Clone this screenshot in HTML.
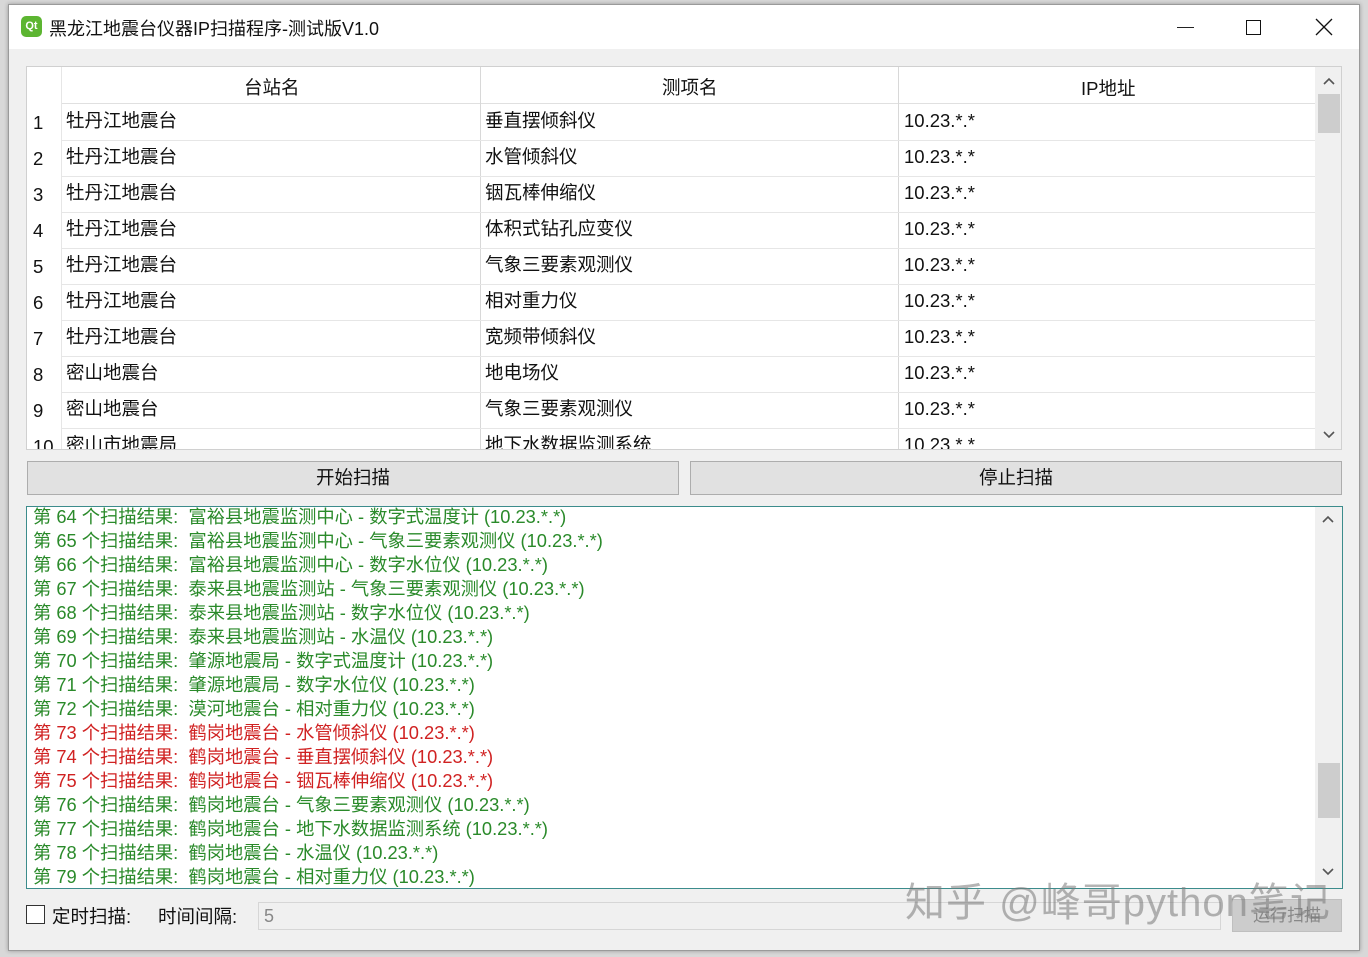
<!DOCTYPE html>
<html><head><meta charset="utf-8"><style>
*{box-sizing:border-box;margin:0;padding:0}
body{width:1368px;height:957px;background:#d8d8d8;position:relative;overflow:hidden;font-family:"Liberation Sans","Noto Sans CJK SC",sans-serif;color:#111}
.a{position:absolute}
#win{left:8px;top:4px;width:1352px;height:947px;background:#f0f0f0;border:1px solid #9a9a9a;box-shadow:0 0 4px rgba(0,0,0,.3)}
#title{left:9px;top:5px;width:1350px;height:44px;background:#fff}
.cell{position:absolute;font-size:18.5px;white-space:nowrap;overflow:hidden}
.log{position:absolute;left:33px;font-size:18.3px;white-space:nowrap;color:#2a8a2a}
.red{color:#d02222}
.btn{position:absolute;background:#e1e1e1;border:1px solid #adadad;font-size:18.5px;text-align:center;line-height:31px}
</style></head><body>
<div id="win" class="a"></div>
<div id="title" class="a"></div>
<div class="a" style="left:21px;top:16px;width:21px;height:21px;border-radius:5px;background:#5cb531;color:#fff;font-size:11px;font-weight:bold;line-height:21px;text-align:center">Qt</div>
<div class="a" style="left:49px;top:15px;font-size:18px">黑龙江地震台仪器IP扫描程序-测试版V1.0</div>
<div class="a" style="left:1177px;top:27px;width:17px;height:1px;background:#222"></div>
<div class="a" style="left:1246px;top:20px;width:15px;height:15px;border:1.5px solid #111"></div>
<svg class="a" style="left:1315px;top:18px" width="18" height="18"><path d="M1 1L17 17M17 1L1 17" stroke="#111" stroke-width="1.3"/></svg>

<div class="a" style="left:26px;top:66px;width:1316px;height:384px;background:#fff;border:1px solid #d0d0d0;overflow:hidden">
<div class="a" style="left:0;top:0;width:35px;height:384px;background:#fff;border-right:1px solid #e6e6e6"></div>
<div class="a" style="left:35px;top:0;width:1253px;height:37px;border-bottom:1px solid #e0e0e0"></div>
<div class="a" style="left:453px;top:0;width:1px;height:384px;background:#d8d8d8"></div>
<div class="a" style="left:871px;top:0;width:1px;height:384px;background:#d8d8d8"></div>
<div class="cell" style="left:217px;top:7px">台站名</div>
<div class="cell" style="left:635px;top:7px">测项名</div>
<div class="cell" style="left:1054px;top:8px">IP地址</div>
<div id="rows"></div>
<div class="a" style="left:1288px;top:0;width:27px;height:384px;background:#f0f0f0"></div>
<div class="a" style="left:1291px;top:27px;width:22px;height:39px;background:#cdcdcd"></div>
<svg class="a" style="left:1296px;top:10px" width="12" height="8"><path d="M1 7L6 2L11 7" fill="none" stroke="#555" stroke-width="1.6"/></svg>
<svg class="a" style="left:1296px;top:364px" width="12" height="8"><path d="M1 1L6 6L11 1" fill="none" stroke="#555" stroke-width="1.6"/></svg>
</div>

<div class="btn" style="left:27px;top:461px;width:652px;height:34px">开始扫描</div>
<div class="btn" style="left:690px;top:461px;width:652px;height:34px">停止扫描</div>

<div class="a" style="left:26px;top:506px;width:1317px;height:383px;background:#fff;border:1px solid #3c8c8c;overflow:hidden"></div>
<div id="logs"></div>
<div class="a" style="left:1315px;top:507px;width:27px;height:381px;background:#f0f0f0"></div>
<div class="a" style="left:1318px;top:763px;width:22px;height:55px;background:#cdcdcd"></div>
<svg class="a" style="left:1322px;top:515px" width="12" height="8"><path d="M1 7L6 2L11 7" fill="none" stroke="#555" stroke-width="1.6"/></svg>
<svg class="a" style="left:1322px;top:868px" width="12" height="8"><path d="M1 1L6 6L11 1" fill="none" stroke="#555" stroke-width="1.6"/></svg>

<div class="a" style="left:26px;top:905px;width:19px;height:19px;background:#fff;border:1px solid #333"></div>
<div class="a" style="left:52px;top:903px;font-size:18.5px">定时扫描:</div>
<div class="a" style="left:158px;top:903px;font-size:18.5px">时间间隔:</div>
<div class="a" style="left:258px;top:902px;width:963px;height:28px;background:#f0f0f0;border:1px solid #d6d6d6;font-size:18px;color:#888;padding-left:5px;line-height:26px">5</div>
<div class="btn" style="left:1232px;top:899px;width:110px;height:33px;background:#cccccc;border-color:#bfbfbf;color:#888;font-size:17px">运行扫描</div>
<div class="a" style="left:905px;top:870px;font-size:40px;color:rgba(120,120,120,.55);white-space:nowrap;letter-spacing:1px">知乎 @峰哥python笔记</div>

<script>
var rows=[["牡丹江地震台","垂直摆倾斜仪"],["牡丹江地震台","水管倾斜仪"],["牡丹江地震台","铟瓦棒伸缩仪"],["牡丹江地震台","体积式钻孔应变仪"],["牡丹江地震台","气象三要素观测仪"],["牡丹江地震台","相对重力仪"],["牡丹江地震台","宽频带倾斜仪"],["密山地震台","地电场仪"],["密山地震台","气象三要素观测仪"],["密山市地震局","地下水数据监测系统"]];
var h="";
rows.forEach(function(r,i){var t=37+i*36;
h+='<div class="cell" style="left:6px;top:'+(t+8)+'px">'+(i+1)+'</div>';
h+='<div class="cell" style="left:39px;top:'+(t+3)+'px">'+r[0]+'</div>';
h+='<div class="cell" style="left:458px;top:'+(t+3)+'px">'+r[1]+'</div>';
h+='<div class="cell" style="left:877px;top:'+(t+6)+'px">10.23.*.*</div>';
h+='<div class="a" style="left:35px;top:'+(t+36)+'px;width:1253px;height:1px;background:#e6e6e6"></div>';});
document.getElementById("rows").innerHTML=h;
var L=[["64","富裕县地震监测中心 - 数字式温度计"],["65","富裕县地震监测中心 - 气象三要素观测仪"],["66","富裕县地震监测中心 - 数字水位仪"],["67","泰来县地震监测站 - 气象三要素观测仪"],["68","泰来县地震监测站 - 数字水位仪"],["69","泰来县地震监测站 - 水温仪"],["70","肇源地震局 - 数字式温度计"],["71","肇源地震局 - 数字水位仪"],["72","漠河地震台 - 相对重力仪"],["73","鹤岗地震台 - 水管倾斜仪",1],["74","鹤岗地震台 - 垂直摆倾斜仪",1],["75","鹤岗地震台 - 铟瓦棒伸缩仪",1],["76","鹤岗地震台 - 气象三要素观测仪"],["77","鹤岗地震台 - 地下水数据监测系统"],["78","鹤岗地震台 - 水温仪"],["79","鹤岗地震台 - 相对重力仪"]];
h="";
L.forEach(function(l,i){h+='<div class="log'+(l[2]?' red':'')+'" style="top:'+(503+i*24)+'px">第 '+l[0]+' 个扫描结果:&nbsp; '+l[1]+' (10.23.*.*)</div>';});
document.getElementById("logs").innerHTML=h;
</script>
</body></html>
